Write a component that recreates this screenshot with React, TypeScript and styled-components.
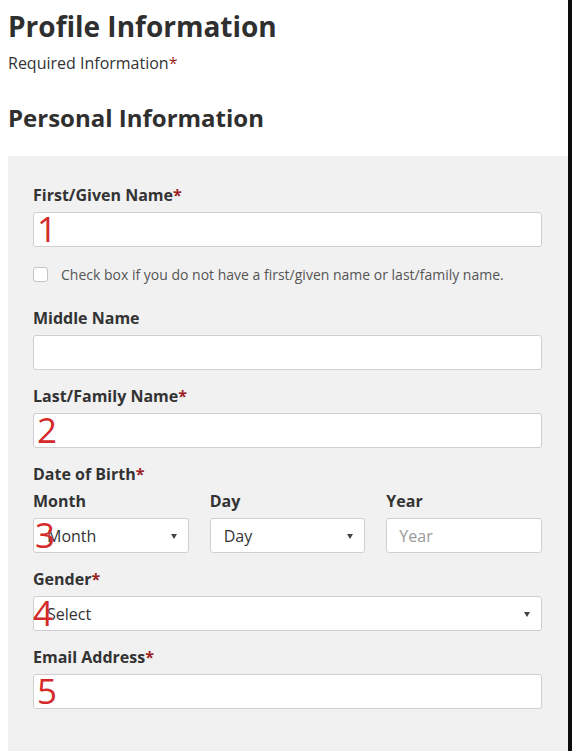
import React from "react";
import styled, { createGlobalStyle } from "styled-components";

const Global = createGlobalStyle`
  html, body { margin: 0; padding: 0; background: #ffffff; }
  body { font-family: "Open Sans", "Noto Sans", sans-serif; color: #333; }
  * { box-sizing: border-box; }
`;

const Page = styled.div`
  display: flex;
  min-height: 751px;
`;

const Main = styled.main`
  width: 568px;
  background: #ffffff;
  padding-left: 8px;
  display: flex;
  flex-direction: column;
`;

const Edge = styled.div`
  flex: 1;
  background: #0d0d0d;
`;

const Title = styled.h1`
  margin: 9px 0 0;
  font-size: 28px;
  line-height: 34px;
  font-weight: 700;
  color: #2f2f2f;
`;

const Subtitle = styled.p`
  margin: 9px 0 0;
  font-size: 16px;
  line-height: 22px;
  color: #333;
`;

const SectionTitle = styled.h2`
  margin: 29px 0 0;
  font-size: 24px;
  line-height: 30px;
  font-weight: 700;
  color: #2f2f2f;
`;

const Star = styled.span`
  color: #9b1f24;
`;

const Panel = styled.section`
  margin-top: 23px;
  flex: 1;
  background: #f1f1f2;
  padding: 29px 26px 50px 25px;
  display: flex;
  flex-direction: column;
  gap: 16px;
`;

const Field = styled.div`
  display: flex;
  flex-direction: column;
`;

const Label = styled.label`
  font-size: 16px;
  line-height: 21px;
  font-weight: 700;
  color: #333;
  margin-bottom: 6px;
`;

const Box = styled.div`
  position: relative;
`;

const TextInput = styled.input`
  display: block;
  width: 100%;
  height: 35px;
  border: 1px solid #cfcfd1;
  border-radius: 3px;
  background: #fff;
  padding: 0 12px;
  font-family: "Open Sans", sans-serif;
  font-size: 16px;
  color: #333;
  outline: none;
  &::placeholder { color: #9a9a9a; }
`;

const SelectBox = styled.div`
  position: relative;
  height: 35px;
  border: 1px solid #cfcfd1;
  border-radius: 3px;
  background: #fff;
  display: flex;
  align-items: center;
  justify-content: space-between;
  padding: 0 11px 0 13px;
  font-size: 16px;
  color: #333;
`;

const Caret = styled.span`
  width: 0;
  height: 0;
  border-left: 3.5px solid transparent;
  border-right: 3.5px solid transparent;
  border-top: 5px solid #444;
  margin-top: 2px;
`;

const Mark = styled.span<{ $left: number }>`
  position: absolute;
  top: -1px;
  left: ${(p) => p.$left}px;
  font-size: 35px;
  line-height: 35px;
  color: #d42a2a;
  pointer-events: none;
`;

const CheckRow = styled.div`
  display: flex;
  align-items: center;
  gap: 13px;
  margin: 4px 0 10px;
  height: 15px;
`;

const CheckSquare = styled.span`
  width: 15px;
  height: 15px;
  border: 1px solid #c4c4c6;
  border-radius: 3px;
  background: #fff;
  flex: none;
`;

const CheckText = styled.span`
  font-size: 14px;
  line-height: 15px;
  color: #555;
`;

const DateGrid = styled.div`
  display: grid;
  grid-template-columns: repeat(3, 1fr);
  column-gap: 21px;
`;

export default function App() {
  return (
    <>
      <Global />
      <Page>
        <Main>
          <Title>Profile Information</Title>
          <Subtitle>
            Required Information<Star>*</Star>
          </Subtitle>
          <SectionTitle>Personal Information</SectionTitle>
          <Panel>
            <Field>
              <Label>
                First/Given Name<Star>*</Star>
              </Label>
              <Box>
                <TextInput />
                <Mark $left={4}>1</Mark>
              </Box>
            </Field>
            <CheckRow>
              <CheckSquare />
              <CheckText>
                Check box if you do not have a first/given name or last/family name.
              </CheckText>
            </CheckRow>
            <Field>
              <Label>Middle Name</Label>
              <TextInput />
            </Field>
            <Field>
              <Label>
                Last/Family Name<Star>*</Star>
              </Label>
              <Box>
                <TextInput />
                <Mark $left={4}>2</Mark>
              </Box>
            </Field>
            <Field>
              <Label>
                Date of Birth<Star>*</Star>
              </Label>
              <DateGrid>
                <Field>
                  <Label>Month</Label>
                  <Box>
                    <SelectBox>
                      <span>Month</span>
                      <Caret />
                    </SelectBox>
                    <Mark $left={2}>3</Mark>
                  </Box>
                </Field>
                <Field>
                  <Label>Day</Label>
                  <SelectBox>
                    <span>Day</span>
                    <Caret />
                  </SelectBox>
                </Field>
                <Field>
                  <Label>Year</Label>
                  <TextInput placeholder="Year" />
                </Field>
              </DateGrid>
            </Field>
            <Field>
              <Label>
                Gender<Star>*</Star>
              </Label>
              <Box>
                <SelectBox>
                  <span>Select</span>
                  <Caret />
                </SelectBox>
                <Mark $left={0}>4</Mark>
              </Box>
            </Field>
            <Field>
              <Label>
                Email Address<Star>*</Star>
              </Label>
              <Box>
                <TextInput />
                <Mark $left={4}>5</Mark>
              </Box>
            </Field>
          </Panel>
        </Main>
        <Edge />
      </Page>
    </>
  );
}
